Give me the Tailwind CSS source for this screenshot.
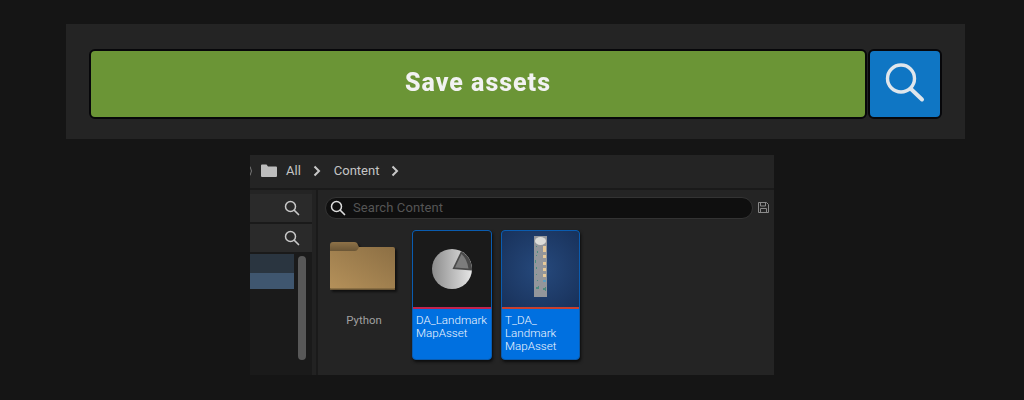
<!DOCTYPE html>
<html lang="en">

<head>
    <meta charset="UTF-8">
    <title>Save assets</title>
    <script src="https://cdn.jsdelivr.net/npm/@tailwindcss/browser@4"></script>
</head>

<body class="w-[1024px] h-[400px] overflow-hidden bg-[#151515] font-['Roboto',sans-serif]">
    <!-- top toolbar -->
    <div class="ml-[66px] mt-[24px] w-[899px] h-[115px] bg-[#242424] flex items-start pt-[25px] pl-[23px] gap-[1px]">
        <div class="w-[778px] h-[70px] rounded-[6px] border-2 border-[#07070a] bg-[#6b9536] flex items-center justify-center">
            <span class="text-[25px] font-extrabold text-[#f2f2f2] tracking-[1px] mb-[3px] blur-[0.4px]">Save assets</span>
        </div>
        <div class="w-[74px] h-[70px] rounded-[6px] border-2 border-[#07070a] bg-[#0f76c4] flex items-center justify-center">
            <svg class="mb-[1px] mr-[2px]" width="42" height="42" viewBox="0 0 42 42" fill="none" stroke="#dfe6ec" stroke-linecap="round">
                <circle cx="18" cy="15.5" r="13.5" stroke-width="3.4" />
                <path d="M28 26 L39 36.5" stroke-width="4" />
            </svg>
        </div>
    </div>

    <!-- content browser -->
    <div class="ml-[250px] mt-[16px] w-[524px] h-[220px] bg-[#242424] flex flex-col overflow-hidden">
        <div class="h-[33px] flex items-center text-[13px] text-[#c4c4c4] pb-[2px]">
            <div class="w-[11px] h-full flex items-center">
                <svg width="3" height="10" viewBox="0 0 3 10" fill="none" stroke="#777" stroke-width="1"><path d="M0 0.5 Q3 5 0 9.5" /></svg>
            </div>
            <svg width="16" height="13" viewBox="0 0 16 13" fill="#bdbdbd"><path d="M0 1.5 Q0 0.5 1 0.5 H5.5 L7 2.5 H15 Q16 2.5 16 3.5 V12 Q16 13 15 13 H1 Q0 13 0 12 Z" /></svg>
            <span class="ml-[9px]">All</span>
            <svg class="ml-[12px]" width="8" height="12" viewBox="0 0 8 12" fill="none" stroke="#c8c8c8" stroke-width="2"><path d="M1.5 1.5 L6 6 L1.5 10.5" /></svg>
            <span class="ml-[13px]">Content</span>
            <svg class="ml-[12px]" width="8" height="12" viewBox="0 0 8 12" fill="none" stroke="#c8c8c8" stroke-width="2"><path d="M1.5 1.5 L6 6 L1.5 10.5" /></svg>
        </div>
        <div class="h-[2px] bg-[#1a1a1a]"></div>

        <div class="flex-1 flex min-h-0">
            <!-- sources panel -->
            <div class="w-[62px] flex flex-col bg-[#1a1a1a]">
                <div class="h-[4px] bg-[#242424]"></div>
                <div class="h-[28px] bg-[#2a2a2a] flex items-center justify-end pr-[12px]">
                    <svg class="mb-[1px]" width="16" height="16" viewBox="0 0 16 16" fill="none" stroke="#c8c8c8" stroke-linecap="round"><circle cx="6.5" cy="6.5" r="5" stroke-width="1.5" /><path d="M10.5 10.5 L14.5 14.5" stroke-width="1.7" /></svg>
                </div>
                <div class="h-[2px]"></div>
                <div class="h-[28px] bg-[#2a2a2a] flex items-center justify-end pr-[12px]">
                    <svg class="mb-[1px]" width="16" height="16" viewBox="0 0 16 16" fill="none" stroke="#c8c8c8" stroke-linecap="round"><circle cx="6.5" cy="6.5" r="5" stroke-width="1.5" /><path d="M10.5 10.5 L14.5 14.5" stroke-width="1.7" /></svg>
                </div>
                <div class="flex-1 flex pt-[2px]">
                    <div class="w-[44px] flex flex-col">
                        <div class="h-[19px] bg-[#2a3540]"></div>
                        <div class="h-[16px] bg-[#3f566f]"></div>
                    </div>
                    <div class="ml-[4px] mt-[2px] w-[8px] h-[104px] rounded-full bg-[#585858]"></div>
                </div>
            </div>
            <div class="w-[4px] bg-[#222222]"></div>
            <div class="w-[2px] bg-[#1a1a1a]"></div>

            <!-- assets -->
            <div class="flex-1 flex flex-col">
                <div class="flex items-center pl-[7px] pt-[7px]">
                    <div class="w-[428px] h-[22px] rounded-full bg-[#0f0f0f] border border-[#333333] flex items-center pl-[4px]">
                        <svg class="mb-[1px]" width="16" height="16" viewBox="0 0 16 16" fill="none" stroke="#dcdcdc" stroke-linecap="round"><circle cx="6.5" cy="6.5" r="5" stroke-width="1.5" /><path d="M10.5 10.5 L14.5 14.5" stroke-width="1.7" /></svg>
                        <span class="ml-[7px] text-[13px] tracking-[0.1px] text-[#555555] mb-[1px]">Search Content</span>
                    </div>
                    <svg class="ml-[5px] mb-[2px]" width="11" height="11" viewBox="0 0 11 11" fill="none" stroke="#8a8a8a" stroke-width="1"><path d="M0.5 0.5 H8.5 L10.5 2.5 V10.5 H0.5 Z M2.5 0.5 V4 H7.5 V0.5 M2.5 10.5 V6.5 H8.5 V10.5" /></svg>
                </div>

                <div class="flex items-start pl-[12px] pt-[11px]">
                    <!-- folder -->
                    <div class="w-[66px] mr-[16px] flex flex-col items-center pt-[12px]">
                        <svg class="self-start drop-shadow-[2px_2px_1px_#0f0f0f]" width="65" height="48" viewBox="0 0 65 48">
                            <defs>
                                <linearGradient id="folderBody" x1="0" y1="1" x2="1" y2="0">
                                    <stop offset="0" stop-color="#b5915a" />
                                    <stop offset="1" stop-color="#8c6f44" />
                                </linearGradient>
                                <linearGradient id="folderTab" x1="0" y1="0" x2="0" y2="1">
                                    <stop offset="0" stop-color="#8e7248" />
                                    <stop offset="1" stop-color="#6b5636" />
                                </linearGradient>
                            </defs>
                            <path d="M0 3 Q0 0 3 0 H24 Q26 0 27 1 L29 5 V9 H0 Z" fill="url(#folderTab)" />
                            <path d="M0 9 H25 Q27 9 28 7 L29 5 H63 Q65 5 65 7 V46 Q65 48 63 48 H2 Q0 48 0 46 Z" fill="url(#folderBody)" />
                            <rect x="0" y="46.5" width="65" height="1.5" fill="#6b5635" />
                        </svg>
                        <span class="mt-[22px] ml-[2px] text-[11.4px] text-[#a0a0a0]">Python</span>
                    </div>

                    <!-- DA_LandmarkMapAsset -->
                    <div class="w-[80px] h-[130px] mr-[9px] rounded-[4px] overflow-hidden bg-[#0070e0] border border-[#0a5cb0] shadow-[1px_2px_3px_#0c0c0c] flex flex-col">
                        <div class="h-[76px] bg-[#1a1a1a] flex items-center justify-center">
                            <svg width="42" height="42" viewBox="0 0 42 42">
                                <defs>
                                    <linearGradient id="pie" x1="0" y1="0" x2="1" y2="0">
                                        <stop offset="0" stop-color="#8c8c8c" />
                                        <stop offset="1" stop-color="#e6e6e6" />
                                    </linearGradient>
                                </defs>
                                <circle cx="21" cy="21" r="20" fill="url(#pie)" />
                                <path d="M21.5 21 L30 3.2 A20 20 0 0 1 41 22.5 Z" fill="#4a4a4a" />
                                <path d="M24 19.5 L30.5 6 Q36 11 37.5 20.5 Z" fill="#7c7c7c" />
                            </svg>
                        </div>
                        <div class="h-[2px] bg-[#c2234f]"></div>
                        <div class="flex-1 px-[3px] pt-[5px] text-[11.6px] font-light leading-[13px] text-[#f0f6ff] whitespace-nowrap">DA_Landmark<br>MapAsset</div>
                    </div>

                    <!-- T_DA_LandmarkMapAsset -->
                    <div class="w-[79px] h-[130px] rounded-[4px] overflow-hidden bg-[#0070e0] border border-[#0a5cb0] shadow-[1px_2px_3px_#0c0c0c] flex flex-col">
                        <div class="h-[76px] bg-[radial-gradient(circle,#26497c_0%,#18315a_100%)] flex justify-center pt-[5px]">
                            <svg width="13" height="61" viewBox="0 0 13 61">
                                <rect width="13" height="61" fill="#93969b" />
                                <ellipse cx="6.5" cy="5" rx="5.5" ry="4" fill="#dcdcd8" />
                                <g fill="#e6c999">
                                    <rect x="9" y="10" width="3" height="6" />
                                    <rect x="9" y="19" width="3" height="3" />
                                    <rect x="9" y="26" width="3" height="3" />
                                    <rect x="9" y="32" width="3" height="3" />
                                    <rect x="9" y="38" width="3" height="3" />
                                </g>
                                <rect x="9" y="44" width="3" height="2" fill="#5d9fc0" />
                                <g fill="#4f8a80">
                                    <rect x="2" y="10" width="1" height="1" />
                                    <rect x="3" y="15" width="1" height="2" />
                                    <rect x="2" y="19" width="1" height="1" />
                                    <rect x="1" y="24" width="1" height="3" />
                                    <rect x="2" y="31" width="1" height="2" />
                                    <rect x="2" y="38" width="1" height="1" />
                                    <rect x="3" y="44" width="1" height="1" />
                                    <rect x="2" y="51" width="3" height="2" />
                                    <rect x="4" y="50" width="1" height="3" />
                                    <rect x="9" y="52" width="3" height="2" />
                                    <rect x="11" y="51" width="1" height="4" />
                                </g>
                            </svg>
                        </div>
                        <div class="h-[2px] bg-[#c8402f]"></div>
                        <div class="flex-1 px-[3px] pt-[5px] text-[11.6px] font-light leading-[13px] text-[#f0f6ff] whitespace-nowrap">T_DA_<br>Landmark<br>MapAsset</div>
                    </div>
                </div>
            </div>
        </div>
    </div>
</body>

</html>
